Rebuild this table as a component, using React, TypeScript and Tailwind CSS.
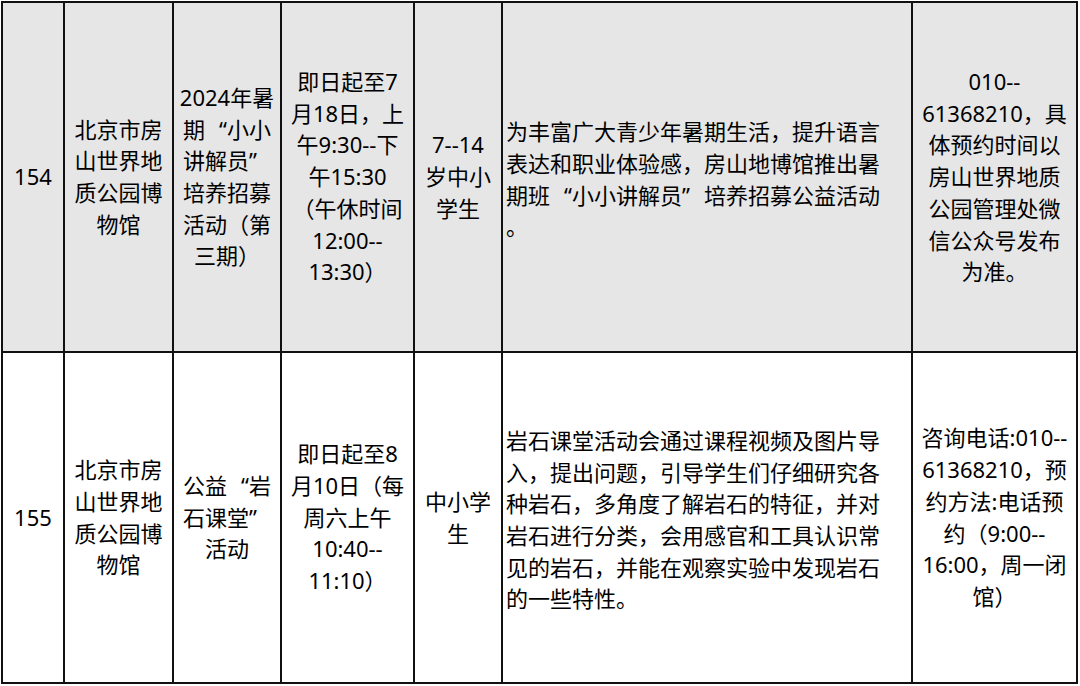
const rows = [
  {
    bg: "bg-[#e6e6e6]",
    h: "h-[348px]",
    cells: [
      ["154"],
      ["北京市房", "山世界地", "质公园博", "物馆"],
      ["2024年暑", "期“小小", "讲解员”", "培养招募", "活动（第", "三期）"],
      ["即日起至7", "月18日，上", "午9:30--下", "午15:30", "（午休时间", "12:00--", "13:30）"],
      ["7--14", "岁中小", "学生"],
      [
        "为丰富广大青少年暑期生活，提升语言",
        "表达和职业体验感，房山地博馆推出暑",
        "期班“小小讲解员”培养招募公益活动",
        "。",
      ],
      ["010--", "61368210，具", "体预约时间以", "房山世界地质", "公园管理处微", "信公众号发布", "为准。"],
    ],
  },
  {
    bg: "bg-white",
    h: "h-[329px]",
    cells: [
      ["155"],
      ["北京市房", "山世界地", "质公园博", "物馆"],
      ["公益“岩", "石课堂”", "活动"],
      ["即日起至8", "月10日（每", "周六上午", "10:40--", "11:10）"],
      ["中小学", "生"],
      [
        "岩石课堂活动会通过课程视频及图片导",
        "入，提出问题，引导学生们仔细研究各",
        "种岩石，多角度了解岩石的特征，并对",
        "岩石进行分类，会用感官和工具认识常",
        "见的岩石，并能在观察实验中发现岩石",
        "的一些特性。",
      ],
      ["咨询电话:010--", "61368210，预", "约方法:电话预", "约（9:00--", "16:00，周一闭", "馆）"],
    ],
  },
];

// curly quotes take a full-width slot, like in the source sheet
function Line({ text }: { text: string }) {
  const parts = text.split(/([“”])/);
  return (
    <div className="whitespace-nowrap">
      {parts.map((p, i) =>
        p === "“" ? (
          <span key={i} className="inline-block w-[1em] text-right">
            {p}
          </span>
        ) : p === "”" ? (
          <span key={i} className="inline-block w-[1em] text-left">
            {p}
          </span>
        ) : (
          <span key={i}>{p}</span>
        )
      )}
    </div>
  );
}

export default function App() {
  return (
    <div className="w-[1080px] h-[686px] bg-white pt-px pl-px overflow-hidden">
      <div
        className="grid w-[1077px] grid-cols-[60px_107px_106px_131px_86px_408px_163px] gap-[2px] bg-[#111] p-[2px] text-[22px] leading-[31.7px] text-black"
        style={{ fontFamily: '"Noto Sans", "Noto Sans CJK SC", sans-serif' }}
      >
        {rows.map((row, ri) =>
          row.cells.map((lines, ci) => (
            <div
              key={`${ri}-${ci}`}
              className={`${row.bg} ${row.h} flex flex-col justify-center ${
                ci === 5 ? "items-start pl-[3px] pt-[5px]" : "items-center text-center"
              }`}
            >
              {lines.map((l, li) => (
                <Line key={li} text={l} />
              ))}
            </div>
          ))
        )}
      </div>
    </div>
  );
}
